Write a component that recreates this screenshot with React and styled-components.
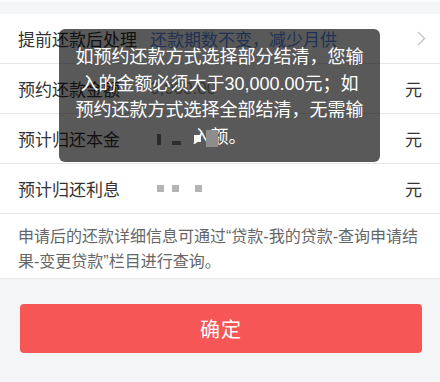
import React from 'react'
import styled, { createGlobalStyle } from 'styled-components'

const GlobalStyle = createGlobalStyle`
  html, body {
    margin: 0;
    padding: 0;
    background: #f4f5f7;
  }
  body {
    font-family: "Liberation Sans", "Noto Sans CJK SC", sans-serif;
  }
`

const Page = styled.div`
  position: relative;
  width: 440px;
  height: 382px;
  overflow: hidden;
  background: #f4f5f7;
`

const TopStrip = styled.div`
  height: 14px;
  border-top: 2px solid #fafafa;
  box-sizing: border-box;
`

const Card = styled.div`
  background: #fff;
`

const Row = styled.div`
  display: flex;
  align-items: center;
  height: 49px;
  padding: 0 18px;
  border-bottom: 1px solid #e6e6e8;
  font-size: 17px;
`

const Label = styled.span`
  width: 132px;
  flex-shrink: 0;
  color: #333;
`

const Value = styled.span`
  flex: 1;
  display: flex;
  align-items: center;
  color: ${(p) => p.color || '#333'};
`

const Unit = styled.span`
  color: #333;
`

const Arrow = styled.svg`
  margin-right: -4px;
`

const Block = styled.i`
  display: inline-block;
  position: relative;
  z-index: ${(p) => (p.over ? 3 : 0)};
  width: ${(p) => p.w}px;
  height: ${(p) => p.h}px;
  margin-left: ${(p) => p.ml || 0}px;
  margin-top: ${(p) => p.mt || 0}px;
  background: ${(p) => p.bg};
`

const Note = styled.div`
  background: #fff;
  padding: 10px 18px 4px;
  border-bottom: 1px solid #e8e8ea;
  color: #666;
  font-size: 16px;
  line-height: 25px;
`

const ButtonWrap = styled.div`
  padding: 25px 18px 0 20px;
`

const Button = styled.button`
  display: block;
  width: 100%;
  height: 49px;
  border: none;
  border-radius: 4px;
  background: #f65656;
  color: #fff;
  font-family: inherit;
  font-size: 20px;
  letter-spacing: 1px;
`

const Toast = styled.div`
  position: absolute;
  z-index: 2;
  top: 29px;
  left: 59px;
  width: 321px;
  height: 133px;
  box-sizing: border-box;
  padding: 15px 16px 12px;
  border-radius: 6px;
  background: rgba(0, 0, 0, 0.65);
  color: #fff;
  font-size: 18px;
  line-height: 26.5px;
  text-align: center;
`

function Chevron () {
  return (
    <Arrow width="9" height="15" viewBox="0 0 9 15">
      <path d="M1 1 L7.5 7.5 L1 14" fill="none" stroke="#c4c4c8" strokeWidth="1.4" />
    </Arrow>
  )
}

export default function App () {
  return (
    <Page>
      <GlobalStyle />
      <TopStrip />
      <Card>
        <Row>
          <Label>提前还款后处理</Label>
          <Value color="#5b8ff0">还款期数不变，减少月供</Value>
          <Chevron />
        </Row>
        <Row>
          <Label>预约还款金额</Label>
          <Value color="#9a9a9a">3,000.00</Value>
          <Unit>元</Unit>
        </Row>
        <Row>
          <Label>预计归还本金</Label>
          <Value>
            <Block w={4} h={11} ml={7} mt={2} bg="#777" />
            <Block w={9} h={4} ml={11} mt={8} bg="#888" />
            <Block over w={7} h={7} ml={13} bg="#fafafa" />
            <Block over w={12} h={17} ml={5} bg="#8d8d8d" />
          </Value>
          <Unit>元</Unit>
        </Row>
        <Row>
          <Label>预计归还利息</Label>
          <Value>
            <Block w={7} h={7} ml={7} bg="#b4b4b4" />
            <Block w={7} h={7} ml={8} bg="#b4b4b4" />
            <Block w={7} h={7} ml={16} bg="#b4b4b4" />
          </Value>
          <Unit>元</Unit>
        </Row>
      </Card>
      <Note>申请后的还款详细信息可通过“贷款-我的贷款-查询申请结果-变更贷款”栏目进行查询。</Note>
      <ButtonWrap>
        <Button>确定</Button>
      </ButtonWrap>
      <Toast>如预约还款方式选择部分结清，您输入的金额必须大于30,000.00元；如预约还款方式选择全部结清，无需输入额。</Toast>
    </Page>
  )
}
